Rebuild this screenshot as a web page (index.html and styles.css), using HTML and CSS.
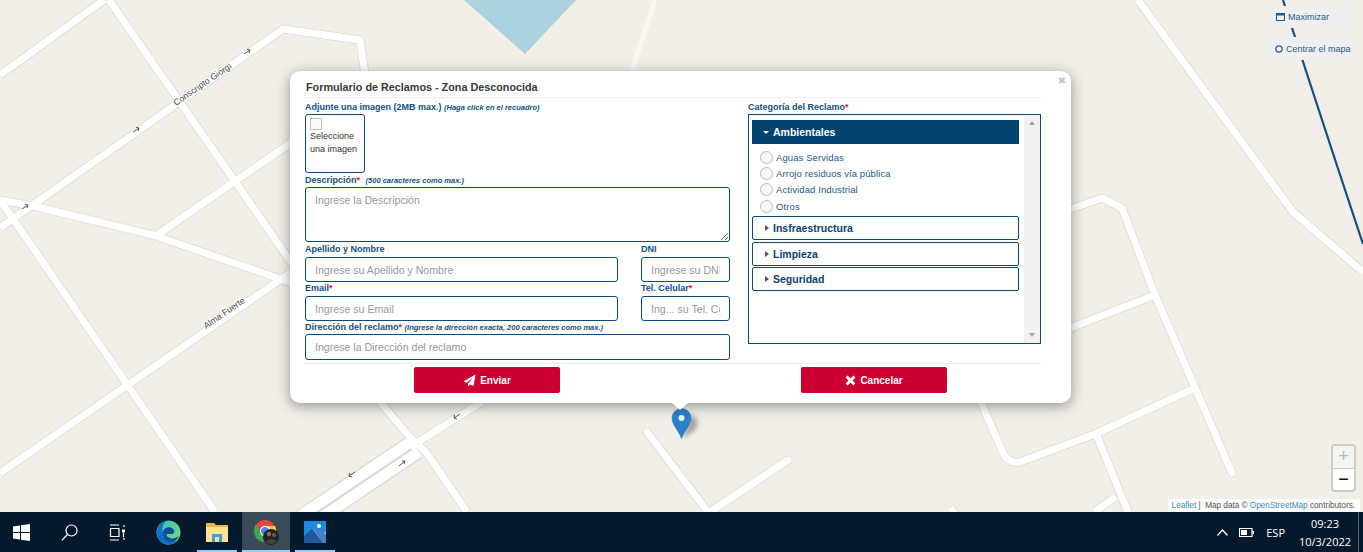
FILE: index.html
```html
<!DOCTYPE html>
<html lang="es">
<head>
<meta charset="utf-8">
<title>Formulario de Reclamos</title>
<link rel="stylesheet" href="styles.css">
</head>
<body>
<main class="map">
  <svg class="tiles" width="1363" height="512" viewBox="0 0 1363 512">
    <defs>
      <g id="roads">
        <path d="M0 75L104 0"/>
        <path d="M109 0L300 275"/>
        <path d="M0 200L215 512"/>
        <path d="M0 228L283 29L360 40L365 75"/>
        <path d="M0 200L37 207L153 235L295 284"/>
        <path d="M157 235L295 140"/>
        <path d="M0 473L290 273"/>
        <path d="M380 402L409 436L426 452L467 512"/>
        <path d="M482 402L410 447"/>
        <path class="cap" d="M647 432L708 512"/>
        <path class="cap" d="M788 460L710 512"/>
        <path d="M980 400L1003 453Q1008 464 1020 462L1095 434L1195 388"/>
        <path d="M1097 436L1128 512"/>
        <path d="M1115 497L1095 512"/>
        <path d="M1065 211L1102 198L1122 208L1155 295L1232 473" class="cap"/>
        <path d="M1155 295L1065 330"/>
        <path d="M1138 0L1293 212L1363 272"/>
        <path class="cap" d="M952 510L955 514"/>
      </g>
      <g id="wide">
        <path d="M412 441L300 516"/>
        <path d="M419 452L312 524"/>
      </g>
    </defs>
    <path class="seam" d="M0 135H1363M0 327H1363"/>
    <path class="water" d="M464 0L525 54L576 0Z"/>
    <path class="path-faint" d="M655 0L632 70"/>
    <g class="casing"><use href="#roads"/></g>
    <g class="casing-wide"><use href="#wide"/></g>
    <g class="road"><use href="#roads"/></g>
    <g class="road-wide"><use href="#wide"/></g>
    <path class="route" d="M1283 0Q1325 130 1363 244"/>
    <g class="oneway">
      <path d="M133 132L139 128M136 127.500L139 128L138 131"/>
      <path d="M244 54L250 50M247 49.500L250 50L249 53"/>
      <path d="M22 209L28 205M25 204.500L28 205L27 208"/>
      <path d="M460 414L454 418M454.500 415L454 418L457 419"/>
      <path d="M355 472L349 476M349.500 473L349 476L352 477"/>
      <path d="M399 466L405 461M402 461L405 461L404 464"/>
    </g>
    <text class="street" transform="translate(176 106) rotate(-34.5)">Conscripto Giorgi</text>
    <text class="street" transform="translate(206 329) rotate(-34.5)">Alma Fuerte</text>
  </svg>

  <button class="map-btn map-btn-max" type="button">
    <svg class="map-btn-icon" width="9" height="8" viewBox="0 0 9 8"><path d="M0 0H9V8H0ZM1 2.500V7H8V2.500Z" fill-rule="evenodd"/></svg>
    Maximizar
  </button>
  <button class="map-btn map-btn-center" type="button">
    <svg class="map-btn-icon" width="8" height="8" viewBox="0 0 8 8"><circle cx="4" cy="4" r="3.2" fill="none" stroke-width="1.2"/></svg>
    Centrar el mapa
  </button>

  <div class="zoom-ctl">
    <span class="zoom-in">+</span>
    <span class="zoom-out">−</span>
  </div>

  <div class="attribution"><a>Leaflet</a> | &nbsp;Map data © <a>OpenStreetMap</a> contributors.</div>

  <svg class="pin" width="44" height="34" viewBox="0 0 44 34">
    <path class="pin-shadow" d="M11 30L18 6L25 10Q28 16 24 22Z"/>
    <path class="pin-body" d="M10.500 30.500C8 23 1 17 1 10A9.500 9.500 0 0 1 20 10C20 17 13 23 10.500 30.500Z"/>
    <circle class="pin-dot" cx="10.500" cy="10" r="3"/>
  </svg>

  <section class="popup">
    <span class="popup-tip"></span>
    <span class="popup-close">✖</span>
    <h1 class="popup-title">Formulario de Reclamos - Zona Desconocida</h1>
    <form class="form">
      <div class="col-left">
        <label class="lbl">Adjunte una imagen (2MB max.) <em class="hint">(Haga click en el recuadro)</em></label>
        <div class="image-box">
          <span class="broken-img"></span>
          <span class="image-alt">Seleccione una imagen</span>
        </div>
        <label class="lbl">Descripción<b class="req">*</b> <em class="hint hint-gap">(500 caracteres como max.)</em></label>
        <textarea class="field field-area" placeholder="Ingrese la Descripción"></textarea>
        <div class="pair">
          <div class="cell">
            <label class="lbl lbl-first">Apellido y Nombre</label>
            <input class="field" type="text" placeholder="Ingrese su Apellido y Nombre">
          </div>
          <div class="cell">
            <label class="lbl lbl-first">DNI</label>
            <input class="field" type="text" placeholder="Ingrese su DNI">
          </div>
          <div class="cell">
            <label class="lbl">Email<b class="req">*</b></label>
            <input class="field" type="text" placeholder="Ingrese su Email">
          </div>
          <div class="cell">
            <label class="lbl">Tel. Celular<b class="req">*</b></label>
            <input class="field" type="text" placeholder="Ing... su Tel. Celular">
          </div>
        </div>
        <label class="lbl lbl-tight">Dirección del reclamo<b class="req">*</b> <em class="hint">(Ingrese la dirección exacta, 200 caracteres como max.)</em></label>
        <input class="field field-wide" type="text" placeholder="Ingrese la Dirección del reclamo">
      </div>
      <div class="col-right">
        <label class="lbl">Categoría del Reclamo<b class="req">*</b></label>
        <div class="cat-box">
          <div class="cat-list">
            <div class="acc acc-open"><span class="caret caret-down"></span>Ambientales</div>
            <ul class="opts">
              <li class="opt"><input class="radio" type="radio" name="c">Aguas Servidas</li>
              <li class="opt"><input class="radio" type="radio" name="c">Arrojo residuos vía pública</li>
              <li class="opt"><input class="radio" type="radio" name="c">Actividad Industrial</li>
              <li class="opt"><input class="radio" type="radio" name="c">Otros</li>
            </ul>
            <div class="acc"><span class="caret"></span>Insfraestructura</div>
            <div class="acc"><span class="caret"></span>Limpieza</div>
            <div class="acc"><span class="caret"></span>Seguridad</div>
          </div>
          <div class="scroll"><span class="arrow-up"></span><span class="arrow-down"></span></div>
        </div>
      </div>
    </form>
    <div class="actions">
      <button class="btn" type="button">
        <svg width="13" height="13" viewBox="0 0 13 13"><path d="M12.500 .5L.5 7.500L3.600 8.800L10 3.400L5 9.600V12.500L7 10.400L10.500 12Z"/></svg>
        Enviar
      </button>
      <button class="btn" type="button">
        <svg width="11" height="11" viewBox="0 0 11 11"><path d="M2.600 .6L5.500 3.400L8.400 .6L10.400 2.600L7.600 5.500L10.400 8.400L8.400 10.400L5.500 7.600L2.600 10.400L.6 8.400L3.400 5.500L.6 2.600Z"/></svg>
        Cancelar
      </button>
    </div>
  </section>
</main>

<footer class="taskbar">
  <div class="task-left">
    <span class="task-slot">
      <svg width="17" height="17" viewBox="0 0 17 17"><path class="ico-white" d="M0 2.400L7 1.400V8H0ZM8 1.200L17 0V8H8ZM0 9H7V15.600L0 14.600ZM8 9H17V17L8 15.800Z"/></svg>
    </span>
    <span class="task-slot">
      <svg width="17" height="17" viewBox="0 0 17 17"><circle class="ico-line" cx="10.500" cy="6.500" r="5.500"/><path class="ico-line" d="M6.500 10.500L.8 16.400"/></svg>
    </span>
    <span class="task-slot slot-gap-3">
      <svg width="17" height="17" viewBox="0 0 17 17"><path class="ico-line" d="M1 1H10M1 16H10M1.500 4.500H10V12.500H1.500ZM15 1V3M15 14V16"/><path class="ico-white" d="M13 5.500H16V8.500H13Z"/><path class="ico-line" d="M14.500 9V13"/></svg>
    </span>
    <span class="task-slot slot-gap-1">
      <svg width="25" height="25" viewBox="0 0 25 25">
        <defs>
          <linearGradient id="edge1" x1="0" y1="0" x2="1" y2="1"><stop offset="0" stop-color="#2fc0c8"/><stop offset="1" stop-color="#7fdc6a"/></linearGradient>
        </defs>
        <circle cx="12.500" cy="12.500" r="12" fill="url(#edge1)"/>
        <path fill="#1170c8" d="M1 11C2 4 8 .5 12 .5C6 3 5 9 8 15C10 20 16 23 22 20C19 24 15 25 12 24.800C5 24 0 18 1 11Z"/>
        <path fill="#0d4f9c" d="M7 13C7 8 12 6 16 8C19 10 19 13 16 14H12C10 14 10 16 12 17C15 19 19 19 23 16C21 21 16 23 12 21.600C9 20 7 17 7 13Z"/>
      </svg>
    </span>
    <span class="task-slot task-active-line slot-gap-1">
      <svg width="22" height="20" viewBox="0 0 22 20">
        <path fill="#e2b93b" d="M0 1H8L10 3H22V8H0Z"/>
        <path fill="#ffe38f" d="M0 5H22V20H0Z"/>
        <path fill="#3aa0e0" d="M6 12H16V20H13V15H9V20H6Z"/>
      </svg>
    </span>
    <span class="task-slot task-active slot-gap-1">
      <svg width="26" height="26" viewBox="0 0 26 26">
        <circle cx="12" cy="12" r="11" fill="#dd4b3e"/>
        <path fill="#3aa757" d="M1 12A11 11 0 0 0 12 23L17 14H8L3 5A11 11 0 0 0 1 12Z"/>
        <path fill="#fcc934" d="M12 7H22A11 11 0 0 1 12 23L17 14Z"/>
        <circle cx="12" cy="12" r="5.200" fill="#fff"/>
        <circle cx="12" cy="12" r="4" fill="#4b8bf5"/>
        <circle cx="18" cy="18" r="8" fill="#232326"/>
        <circle cx="16" cy="15" r="2.200" fill="#8a6a5a"/>
        <circle cx="21" cy="16" r="2" fill="#6a5a55"/>
        <path fill="#4a4048" d="M13 24C13 20 20 19 24 22L20 25Z"/>
      </svg>
    </span>
    <span class="task-slot task-active-line">
      <svg width="22" height="22" viewBox="0 0 22 22">
        <path fill="#1c8ae0" d="M0 0H22V22H0Z"/>
        <path fill="#7bb7ea" d="M0 15L8 7L15 13L22 11V22H0Z"/>
        <path fill="#1f5a9e" d="M0 22V15L8 7L19 22Z"/>
        <path fill="#4a7fc4" d="M11 10L15 7L22 14V22H19Z"/>
        <circle cx="15" cy="5" r="2" fill="#fff"/>
      </svg>
    </span>
  </div>
  <div class="tray">
    <svg class="tray-caret" width="11" height="7" viewBox="0 0 11 7"><path class="ico-line" d="M.5 6.500L5.500 1L10.500 6.500"/></svg>
    <svg class="battery" width="15" height="9" viewBox="0 0 15 9"><path class="ico-line" d="M.5 .5H13V8.500H.5Z"/><path class="ico-white" d="M2 2H8V7H2ZM13.500 3H15V6H13.500Z"/></svg>
    <span class="lang">ESP</span>
    <div class="clock"><span>09:23</span><span>10/3/2022</span></div>
    <span class="show-desktop"></span>
  </div>
</footer>
</body>
</html>
```

FILE: styles.css
```css
* { box-sizing: border-box; }
html, body { margin: 0; height: 552px; overflow: hidden; }
body {
  display: flex;
  flex-direction: column;
  font-family: "Liberation Sans", Arial, sans-serif;
  background: #f2efe9;
}

/* map */
.map { position: relative; flex: 0 0 512px; overflow: hidden; background: #f2efe9; }
.tiles { position: absolute; inset: 0; display: block; }
.seam { stroke: #efece6; stroke-width: 1; fill: none; }
.water { fill: #aad3df; }
.path-faint { fill: none; stroke: #f8f7f3; stroke-width: 5; }
.casing, .road, .casing-wide, .road-wide { fill: none; stroke-linejoin: round; }
.casing { stroke: #e2dfd8; stroke-width: 9; }
.road { stroke: #fff; stroke-width: 7; }
.casing-wide { stroke: #d9d6cf; stroke-width: 13; }
.road-wide { stroke: #fff; stroke-width: 11; }
.cap { stroke-linecap: round; }
.route { fill: none; stroke: #17507f; stroke-width: 2.2; }
.oneway { fill: none; stroke: #555; stroke-width: 1; }
.street {
  font-size: 8.8px;
  fill: #444;
  stroke: #fff;
  stroke-width: 2px;
  paint-order: stroke;
}

.map-btn {
  position: absolute;
  left: 1267px;
  width: 88px;
  height: 22px;
  padding: 0 0 0 9px;
  display: flex;
  align-items: center;
  gap: 3px;
  border: 0;
  border-radius: 2px;
  background: #efefef;
  color: #2a5a8c;
  font: 9px "Liberation Sans", Arial, sans-serif;
  white-space: nowrap;
}
.map-btn-max { top: 6px; }
.map-btn-center { top: 37px; height: 23px; padding-left: 8px; }
.map-btn-icon { fill: #1f5a8e; stroke: #1f5a8e; stroke-width: 0; flex: none; }
.map-btn-center .map-btn-icon { fill: none; stroke-width: 1; }

.zoom-ctl {
  position: absolute;
  left: 1331px;
  top: 444px;
  width: 25px;
  height: 48px;
  display: flex;
  flex-direction: column;
  border: 2px solid #cfcdc8;
  border-radius: 4px;
  background: #fff;
  overflow: hidden;
}
.zoom-in, .zoom-out {
  flex: 1;
  display: flex;
  align-items: center;
  justify-content: center;
  font: 18px "Liberation Sans", Arial, sans-serif;
}
.zoom-in { background: #f4f4f4; color: #bbb; border-bottom: 1px solid #ccc; }
.zoom-out { color: #111; }

.attribution {
  position: absolute;
  right: 3px;
  bottom: 0;
  height: 13px;
  padding: 0 5px 0 4px;
  background: rgba(255, 255, 255, .75);
  color: #555;
  font-size: 8.2px;
  line-height: 13px;
  white-space: nowrap;
}
.attribution a { color: #3d8fc0; }

.pin { position: absolute; left: 671px; top: 408px; }
.pin-shadow { fill: rgba(0, 0, 0, .32); filter: blur(2.5px); }
.pin-body { fill: #2a81cb; stroke: #2473b8; stroke-width: .5; }
.pin-dot { fill: #e8f2fb; }

/* popup */
.popup {
  position: absolute;
  left: 290px;
  top: 71px;
  width: 781px;
  height: 332px;
  padding: 8px 30px 0 15px;
  background: #fff;
  border-radius: 10px;
  box-shadow: 0 3px 14px rgba(0, 0, 0, .4);
  display: flex;
  flex-direction: column;
}
.popup-tip {
  position: absolute;
  left: 382px;
  top: 332px;
  width: 0;
  height: 0;
  border-left: 8px solid transparent;
  border-right: 8px solid transparent;
  border-top: 7px solid #fff;
}
.popup-close {
  position: absolute;
  right: 3px;
  top: 4px;
  width: 12px;
  text-align: center;
  color: #c3c3c3;
  font: bold 10px/12px "DejaVu Sans", sans-serif;
}
.popup-title {
  margin: 0;
  height: 19px;
  padding-left: 1px;
  border-bottom: 1px solid #eee;
  color: #3a3a3a;
  font-size: 10.8px;
  font-weight: bold;
  line-height: 16px;
}

.form { display: grid; grid-template-columns: 425px 293px; gap: 18px; flex: none; }
.col-left, .col-right { display: flex; flex-direction: column; }

.lbl {
  display: block;
  height: 14px;
  color: #124f82;
  font-size: 9px;
  font-weight: bold;
  line-height: 14px;
  white-space: nowrap;
}
.col-left > .lbl:first-child, .col-right > .lbl:first-child { height: 16px; line-height: 18px; }
.lbl-first { height: 15px; }
.cell .lbl { line-height: 13px; }
.cell .lbl-first { line-height: 14px; }
.lbl-tight { height: 13px; line-height: 13px; }
.req { color: #e8123c; }
.hint { font-size: 7.5px; font-style: italic; }
.hint-gap { margin-left: 3px; }

.image-box {
  width: 60px;
  height: 59px;
  padding: 3px 4px;
  border: 1px solid #0a4a7e;
  border-radius: 3px;
  color: #333;
  font-size: 9px;
  line-height: 13px;
}
.broken-img {
  display: block;
  width: 12px;
  height: 12px;
  border: 1px solid #c0c0c0;
  border-radius: 1px;
  background: #fafafa;
}
.image-alt { display: block; }

.field {
  display: block;
  width: 100%;
  height: 25px;
  padding: 0 9px;
  margin: 0;
  border: 1px solid #0a4a7e;
  border-radius: 3px;
  outline: 0;
  background: #fff;
  color: #333;
  font: 10.6px "Liberation Sans", Arial, sans-serif;
}
.field::placeholder { color: #999; opacity: 1; }
.field-area { height: 55px; padding-top: 6px; resize: vertical; }
.field-wide { height: 26px; }

.pair { display: grid; grid-template-columns: 313px 89px; column-gap: 23px; }
.cell { min-width: 0; }

.cat-box {
  display: flex;
  height: 230px;
  border: 1px solid #0a4a7e;
  padding: 0 0 0 3px;
}
.cat-list { flex: 1; min-width: 0; padding: 5px 5px 0 0; }
.acc {
  display: flex;
  align-items: center;
  height: 24px;
  margin-bottom: 2px;
  padding-left: 12px;
  border: 1px solid #0a4a7e;
  border-radius: 2px;
  color: #0a3f72;
  font-size: 10.5px;
  font-weight: bold;
}
.acc + .acc { margin-bottom: 1px; }
.acc-open {
  padding-left: 10px;
  margin-bottom: 5px;
  background: #02426f;
  border-color: #02426f;
  border-radius: 0;
  color: #fff;
}
.caret {
  width: 0;
  height: 0;
  margin-right: 4px;
  border-top: 3px solid transparent;
  border-bottom: 3px solid transparent;
  border-left: 4px solid #555;
}
.caret-down {
  border-left: 3px solid transparent;
  border-right: 3px solid transparent;
  border-top: 3px solid #fff;
  border-bottom: 0;
}
.opts { list-style: none; margin: 0 0 2px; padding: 0 0 0 8px; }
.opt {
  display: flex;
  align-items: center;
  height: 16.3px;
  color: #1f5a8c;
  font-size: 9.5px;
  letter-spacing: .1px;
}
.radio {
  appearance: none;
  flex: none;
  width: 13px;
  height: 13px;
  margin: 0 3px 0 0;
  border: 1px solid #bdbdbd;
  border-radius: 50%;
  background: #f6f6f6;
}
.scroll {
  flex: none;
  width: 16px;
  display: flex;
  flex-direction: column;
  justify-content: space-between;
  align-items: center;
  padding: 6px 0;
  background: #f1f1f1;
}
.arrow-up, .arrow-down { width: 0; height: 0; border-left: 3.5px solid transparent; border-right: 3.5px solid transparent; }
.arrow-up { border-bottom: 4px solid #a3a3a3; }
.arrow-down { border-top: 4px solid #a3a3a3; }

.actions {
  display: grid;
  grid-template-columns: 146px 146px;
  justify-content: start;
  column-gap: 241px;
  margin-top: 3px;
  padding: 3px 0 0 109px;
  border-top: 1px solid #eee;
}
.btn {
  display: flex;
  align-items: center;
  justify-content: center;
  gap: 4px;
  height: 26px;
  padding: 0;
  border: 0;
  border-radius: 2px;
  background: #cc0033;
  color: #fff;
  font: bold 10px "Liberation Sans", Arial, sans-serif;
}
.btn svg { fill: #fff; flex: none; }

/* taskbar */
.taskbar {
  flex: 0 0 40px;
  display: flex;
  justify-content: space-between;
  background: #04192c;
  color: #fff;
}
.task-left { display: flex; margin-left: -3px; }
.task-slot {
  position: relative;
  width: 48px;
  height: 40px;
  display: flex;
  align-items: center;
  justify-content: center;
}
.slot-gap-3 { margin-right: 3px; }
.slot-gap-1 { margin-right: 1px; }
.task-active { background: #3a4a58; }
.task-active::after, .task-active-line::after {
  content: "";
  position: absolute;
  bottom: 0;
  height: 2px;
  background: #99cdf5;
}
.task-active::after { left: 0; right: 0; }
.task-active-line::after { left: 4px; right: 4px; }
.ico-white { fill: #fff; }
.ico-line { fill: none; stroke: #fff; stroke-width: 1.2; }
.tray { display: flex; align-items: center; font-family: "Open Sans", sans-serif; }
.tray-caret { margin-right: 11px; }
.battery { margin-right: 12px; }
.lang { font-size: 11px; margin-right: 11px; }
.clock {
  width: 58px;
  display: flex;
  flex-direction: column;
  align-items: center;
  gap: 3px;
  font-size: 11px;
  line-height: 15px;
  margin-right: 4px;
}
.show-desktop { width: 5px; height: 40px; border-left: 1px solid #54616d; }
```
